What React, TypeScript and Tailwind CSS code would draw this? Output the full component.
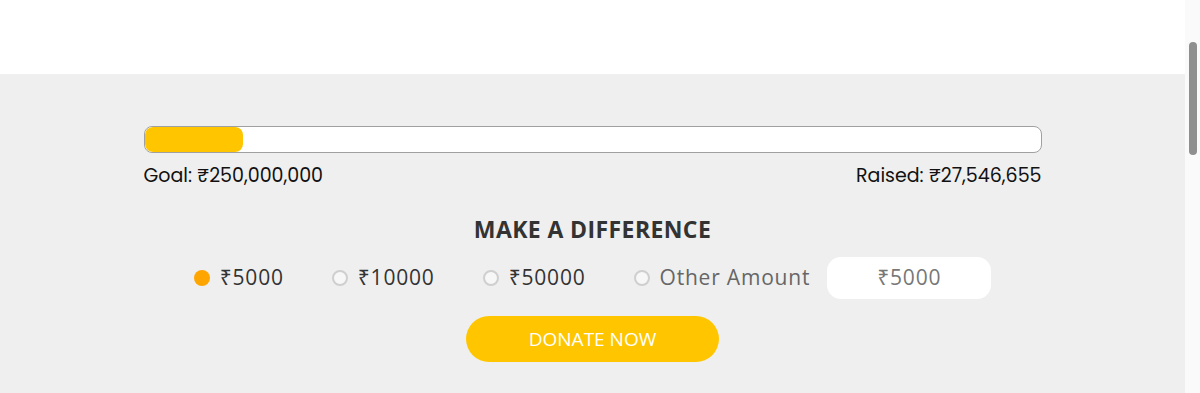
import React, { useState } from "react";

const amounts = ["₹5000", "₹10000", "₹50000"];

const Radio: React.FC<{ checked: boolean }> = ({ checked }) =>
  checked ? (
    <span className="w-4 h-4 rounded-full bg-[#ffa500] shrink-0" />
  ) : (
    <span className="w-4 h-4 rounded-full border-2 border-[#cfcfcf] bg-[#f7f7f7] shrink-0" />
  );

const App: React.FC = () => {
  const [selected, setSelected] = useState<string>("₹5000");
  const raised = 27546655;
  const goal = 250000000;
  const pct = Math.max((raised / goal) * 100, 11);

  return (
    <div className="flex w-[1200px] h-[393px] overflow-hidden bg-white">
      <main className="flex-1 flex flex-col">
        <div className="h-[74px] bg-white" />
        <section className="flex-1 bg-[#efefef] pt-[52px]">
          <div className="w-[898px] mx-auto font-['Poppins','Open_Sans','Noto_Sans',sans-serif]">
            <div className="h-[27px] bg-white border border-[#a0a0a0] rounded-[8px] overflow-hidden">
              <div
                className="h-full bg-[#ffc600] rounded-[8px]"
                style={{ width: `${pct}%` }}
              />
            </div>
            <div className="flex justify-between mt-[10px] text-[19px] leading-[26px] text-[#111]">
              <span>Goal: ₹250,000,000</span>
              <span>Raised: ₹27,546,655</span>
            </div>
          </div>

          <h2 className="mt-[25px] text-center text-[23px] leading-[30px] font-bold tracking-[0.4px] text-[#333] font-['Open_Sans','Noto_Sans',sans-serif]">
            MAKE A DIFFERENCE
          </h2>

          <div className="mt-[13px] flex items-center justify-center font-['Open_Sans','Noto_Sans',sans-serif] text-[21px] tracking-[0.8px]">
            {amounts.map((a) => (
              <button
                key={a}
                onClick={() => setSelected(a)}
                className="flex items-center gap-[10px] mr-[48px] text-[#333]"
              >
                <Radio checked={selected === a} />
                <span>{a}</span>
              </button>
            ))}
            <button
              onClick={() => setSelected("other")}
              className="flex items-center gap-[10px] mr-[17px] text-[#666]"
            >
              <Radio checked={selected === "other"} />
              <span>Other Amount</span>
            </button>
            <div className="w-[164px] h-[42px] bg-white rounded-[14px] flex items-center justify-center text-[#777]">
              ₹5000
            </div>
          </div>

          <div className="mt-[17px] flex justify-center">
            <button className="w-[253px] h-[46px] rounded-full bg-[#ffc600] text-white text-[19px] font-['Open_Sans','Noto_Sans',sans-serif]">
              DONATE NOW
            </button>
          </div>
        </section>
      </main>
      <div className="w-[15px] bg-[#fafafa] flex flex-col items-center pt-[42px]">
        <div className="w-[8px] h-[113px] rounded-full bg-[#8f8f8f]" />
      </div>
    </div>
  );
};

export default App;
